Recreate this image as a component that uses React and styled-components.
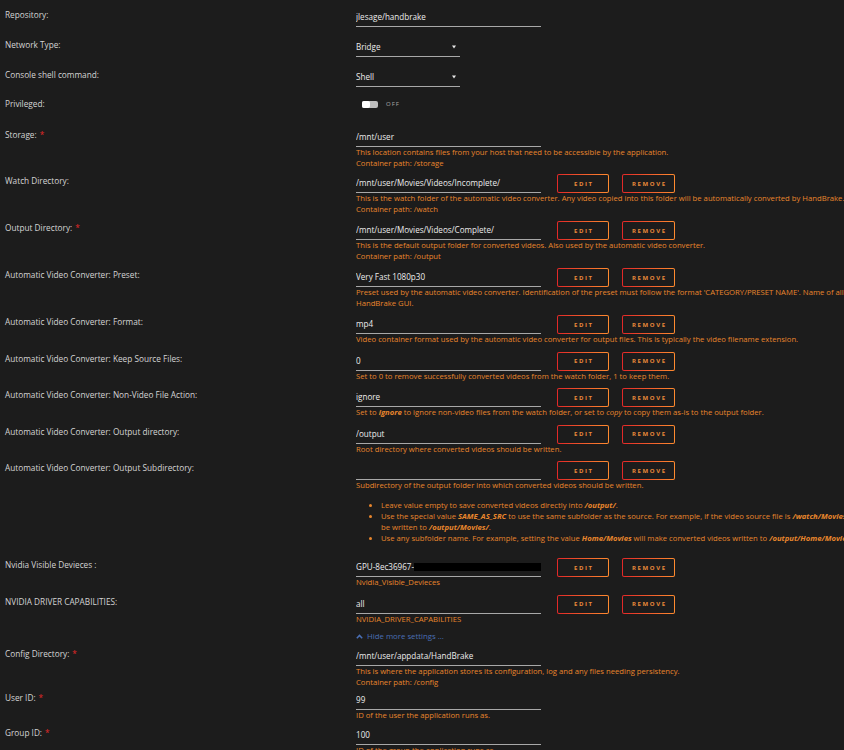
import React from 'react';
import styled, { createGlobalStyle } from 'styled-components';

const Global = createGlobalStyle`
  html, body { margin: 0; padding: 0; background: #1c1c1c; overflow: hidden; }
  body { font-family: "Open Sans", "Noto Sans", sans-serif; }
`;

const Page = styled.div`
  padding-top: 8px;
  width: 1500px;
`;

const Row = styled.div`
  display: flex;
  align-items: flex-start;
  margin-bottom: ${p => p.$gap}px;
`;

const Label = styled.div`
  flex: 0 0 351px;
  padding-left: 5px;
  margin-top: 2px;
  font-size: 8.25px;
  line-height: 10px;
  color: #d4d4d4;
`;

const Required = styled.span`
  color: #e22828;
  margin-left: 3px;
`;

const Value = styled.div`
  flex: 1;
  min-width: 0;
`;

const FieldLine = styled.div`
  display: flex;
  align-items: center;
  height: 19px;
`;

const TextInput = styled.div`
  box-sizing: border-box;
  width: 185px;
  height: 19px;
  border-bottom: 1px solid #a8a8a8;
  font-size: 8.1px;
  line-height: 18px;
  color: #ececec;
  white-space: nowrap;
  overflow: hidden;
`;

const SelectBox = styled(TextInput)`
  width: 104px;
  display: flex;
  align-items: center;
  justify-content: space-between;
  padding-right: 4px;
`;

const Redacted = styled.span`
  display: inline-block;
  width: 151px;
  height: 8px;
  background: #000;
  vertical-align: -1px;
`;

const ActionButton = styled.button`
  box-sizing: border-box;
  width: ${p => p.$w}px;
  height: 19px;
  margin: 0 0 0 ${p => p.$ml}px;
  padding: 0 0 0 1.6px;
  border: 1px solid transparent;
  border-radius: 2px;
  background:
    linear-gradient(#1c1c1c, #1c1c1c) padding-box,
    linear-gradient(90deg, #e22828, #ff8b2f) border-box;
  color: #e8893a;
  font-family: inherit;
  font-size: 6px;
  font-weight: 700;
  letter-spacing: 1.6px;
  display: flex;
  align-items: center;
  justify-content: center;
`;

const Desc = styled.div`
  font-size: 7.7px;
  line-height: 10.5px;
  color: #e8862c;
  white-space: nowrap;
`;

const Em = styled.em`
  font-weight: ${p => (p.$bold ? 700 : 400)};
`;

const Bullets = styled.ul`
  margin: 9px 0 7.5px;
  padding-left: 25px;
  font-size: 7.7px;
  line-height: 11px;
  color: #e8862c;
  white-space: nowrap;
`;

const Switch = styled.div`
  display: flex;
  align-items: center;
  height: 14px;
  margin-left: 6px;
`;

const Track = styled.span`
  display: flex;
  width: 16px;
  height: 7px;
  border-radius: 2px;
  background: #bcbcbc;
`;

const Knob = styled.span`
  width: 8px;
  height: 7px;
  border-radius: 2px;
  background: #ffffff;
`;

const SwitchText = styled.span`
  margin-left: 8px;
  font-size: 6px;
  letter-spacing: 1px;
  color: #a8a8a8;
`;

const HideLink = styled.div`
  display: flex;
  align-items: center;
  gap: 4px;
  height: 10px;
  font-size: 7.8px;
  color: #4a6fb5;
`;

const Caret = () => (
  <svg width="4" height="4" viewBox="0 0 4 4">
    <path d="M0 0.5 H4 L2 3.5 Z" fill="#e8e8e8" />
  </svg>
);

const ChevronUp = () => (
  <svg width="7" height="5" viewBox="0 0 7 5">
    <path d="M0.8 4.2 L3.5 1.4 L6.2 4.2" fill="none" stroke="#4a6fb5" strokeWidth="1.5" />
  </svg>
);

const Buttons = () => (
  <>
    <ActionButton $w={52} $ml={16}>EDIT</ActionButton>
    <ActionButton $w={53} $ml={13}>REMOVE</ActionButton>
  </>
);

const Field = ({ label, required, value, buttons, gap, children }) => (
  <Row $gap={gap}>
    <Label>
      {label}
      {required && <Required>*</Required>}
    </Label>
    <Value>
      <FieldLine>
        <TextInput>{value}</TextInput>
        {buttons && <Buttons />}
      </FieldLine>
      {children}
    </Value>
  </Row>
);

const SelectField = ({ label, value, gap }) => (
  <Row $gap={gap}>
    <Label>{label}</Label>
    <Value>
      <FieldLine>
        <SelectBox>
          <span>{value}</span>
          <Caret />
        </SelectBox>
      </FieldLine>
    </Value>
  </Row>
);

export default function App() {
  return (
    <>
      <Global />
      <Page>
        <Field label="Repository:" value="jlesage/handbrake" gap={11} />
        <SelectField label="Network Type:" value="Bridge" gap={11} />
        <SelectField label="Console shell command:" value="Shell" gap={10} />
        <Row $gap={17}>
          <Label>Privileged:</Label>
          <Value>
            <Switch>
              <Track><Knob /></Track>
              <SwitchText>OFF</SwitchText>
            </Switch>
          </Value>
        </Row>
        <Field label="Storage:" required value="/mnt/user" gap={6}>
          <Desc>
            This location contains files from your host that need to be accessible by the application.
            <br />
            Container path: /storage
          </Desc>
        </Field>
        <Field label="Watch Directory:" value="/mnt/user/Movies/Videos/Incomplete/" buttons gap={7}>
          <Desc>
            This is the watch folder of the automatic video converter. Any video copied into this folder will be automatically converted by HandBrake.
            <br />
            Container path: /watch
          </Desc>
        </Field>
        <Field label="Output Directory:" required value="/mnt/user/Movies/Videos/Complete/" buttons gap={7}>
          <Desc>
            This is the default output folder for converted videos. Also used by the automatic video converter.
            <br />
            Container path: /output
          </Desc>
        </Field>
        <Field label="Automatic Video Converter: Preset:" value="Very Fast 1080p30" buttons gap={7}>
          <Desc>
            Preset used by the automatic video converter. Identification of the preset must follow the format 'CATEGORY/PRESET NAME'. Name of all available presets can be seen in the
            <br />
            HandBrake GUI.
          </Desc>
        </Field>
        <Field label="Automatic Video Converter: Format:" value="mp4" buttons gap={7}>
          <Desc>
            Video container format used by the automatic video converter for output files. This is typically the video filename extension.
          </Desc>
        </Field>
        <Field label="Automatic Video Converter: Keep Source Files:" value="0" buttons gap={7}>
          <Desc>Set to 0 to remove successfully converted videos from the watch folder, 1 to keep them.</Desc>
        </Field>
        <Field label="Automatic Video Converter: Non-Video File Action:" value="ignore" buttons gap={7}>
          <Desc>
            Set to <Em $bold>ignore</Em> to ignore non-video files from the watch folder, or set to <Em>copy</Em> to copy them as-is to the output folder.
          </Desc>
        </Field>
        <Field label="Automatic Video Converter: Output directory:" value="/output" buttons gap={7}>
          <Desc>Root directory where converted videos should be written.</Desc>
        </Field>
        <Field label="Automatic Video Converter: Output Subdirectory:" value="" buttons gap={7}>
          <Desc>Subdirectory of the output folder into which converted videos should be written.</Desc>
          <Bullets>
            <li>
              Leave value empty to save converted videos directly into <Em $bold>/output/</Em>.
            </li>
            <li>
              Use the special value <Em $bold>SAME_AS_SRC</Em> to use the same subfolder as the source. For example, if the video source file is <Em $bold>/watch/Movies/video.mkv</Em>, the converted video will
              <br />
              be written to <Em $bold>/output/Movies/</Em>.
            </li>
            <li>
              Use any subfolder name. For example, setting the value <Em $bold>Home/Movies</Em> will make converted videos written to <Em $bold>/output/Home/Movies/</Em>.
            </li>
          </Bullets>
        </Field>
        <Field
          label="Nvidia Visible Devieces :"
          value={<>GPU-8ec36967-<Redacted /></>}
          buttons
          gap={7}
        >
          <Desc>Nvidia_Visible_Devieces</Desc>
        </Field>
        <Field label="NVIDIA DRIVER CAPABILITIES:" value="all" buttons gap={7}>
          <Desc>NVIDIA_DRIVER_CAPABILITIES</Desc>
        </Field>
        <Row $gap={6}>
          <Label />
          <Value>
            <HideLink>
              <ChevronUp />
              Hide more settings ...
            </HideLink>
          </Value>
        </Row>
        <Field label="Config Directory:" required value="/mnt/user/appdata/HandBrake" gap={4}>
          <Desc>
            This is where the application stores its configuration, log and any files needing persistency.
            <br />
            Container path: /config
          </Desc>
        </Field>
        <Field label="User ID:" required value="99" gap={5.5}>
          <Desc>ID of the user the application runs as.</Desc>
        </Field>
        <Field label="Group ID:" required value="100" gap={5}>
          <Desc>ID of the group the application runs as.</Desc>
        </Field>
      </Page>
    </>
  );
}
